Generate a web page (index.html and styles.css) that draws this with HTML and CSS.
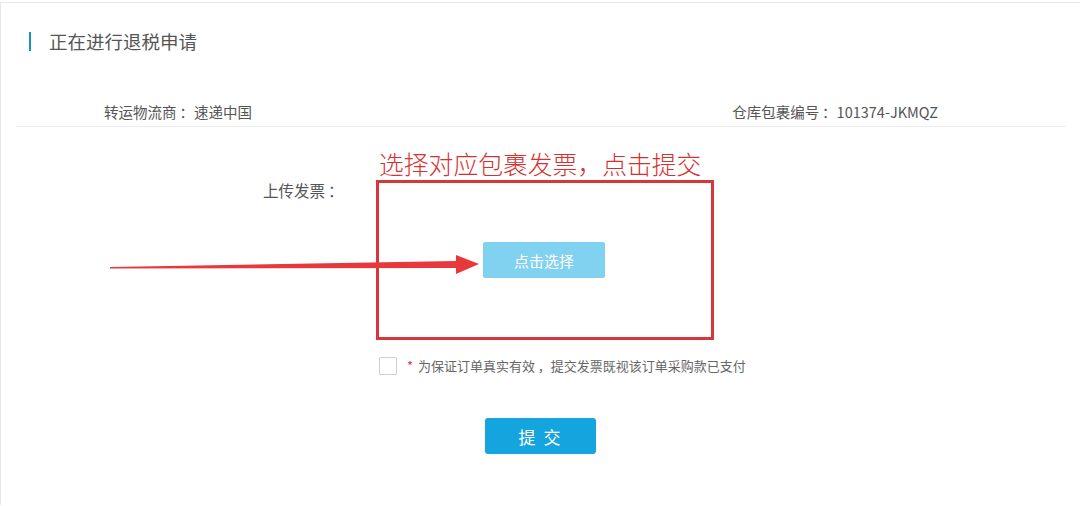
FILE: index.html
```html
<!DOCTYPE html>
<html lang="zh-CN">
<head>
    <meta charset="UTF-8">
    <meta name="viewport" content="width=device-width, initial-scale=1.0">
    <title>退税申请</title>
    <link rel="stylesheet" href="styles.css">
</head>
<body>
    <div class="panel">
        <div class="title">
            <span class="title-bar"></span>
            <span>正在进行退税申请</span>
        </div>

        <div class="info">
            <span>转运物流商<span class="colon">：</span>速递中国</span>
            <span>仓库包裹编号<span class="colon">：</span>101374-JKMQZ</span>
        </div>

        <div class="upload">
            <div></div>
            <div class="note">选择对应包裹发票，点击提交</div>
            <label class="upload-label">上传发票<span class="colon">：</span></label>
            <div class="upload-box">
                <button type="button" class="pick">点击选择</button>
            </div>
        </div>

        <div class="agree">
            <span class="checkbox"></span>
            <span class="star">*</span>
            <span>为保证订单真实有效<span class="colon">，</span>提交发票既视该订单采购款已支付</span>
        </div>

        <button type="button" class="submit">提 交</button>

        <!-- annotation arrow -->
        <svg class="arrow" width="372" height="26" viewBox="0 0 372 26">
            <polygon points="2,15 348,9 348,3 371,12 348,22 348,16 2,16.5" fill="#e8383b"/>
        </svg>
    </div>
</body>
</html>
```

FILE: styles.css
```css
body {
    margin: 0;
    background-color: #fff;
    font-family: "Noto Sans CJK SC", "Liberation Sans", sans-serif;
    color: #555;
}

.panel {
    position: relative;
    margin-top: 2px;
    height: 503px;
    border-top: 1px solid #e8e8e8;
    border-left: 1px solid #e8e8e8;
    box-sizing: border-box;
}

/* push full-width punctuation toward the middle of its cell */
.colon {
    padding-left: 0.2em;
}

.title {
    display: flex;
    align-items: center;
    gap: 18px;
    padding-top: 28px;
    padding-left: 28px;
    font-size: 18.5px;
    line-height: 20px;
    color: #555;
}

.title-bar {
    width: 2px;
    height: 19px;
    background-color: #1b8fc9;
}

.info {
    display: flex;
    justify-content: space-between;
    margin: 51px 14px 0 15px;
    padding: 0 128px 4px 88px;
    border-bottom: 1px solid #ececec;
    font-size: 14.5px;
    line-height: 20px;
}

.upload {
    display: grid;
    grid-template-columns: 113px auto;
    row-gap: 2px;
    padding-left: 262px;
    margin-top: 21px;
}

.note {
    padding-left: 3px;
    font-size: 24.8px;
    line-height: 30px;
    color: #d8302f;
    font-weight: 300;
}

.upload-label {
    font-size: 15.5px;
    line-height: 20px;
    color: #555;
}

.upload-box {
    display: flex;
    justify-content: center;
    align-items: center;
    width: 338px;
    height: 160px;
    box-sizing: border-box;
    border: 3px solid #d7363b;
}

.pick {
    width: 122px;
    height: 36px;
    border: none;
    border-radius: 2px;
    background-color: #80d2f0;
    color: #fff;
    font-family: inherit;
    font-size: 15px;
    margin-left: -2px;
}

.agree {
    display: flex;
    align-items: center;
    margin-top: 17px;
    padding-left: 378px;
    font-size: 13px;
    line-height: 18px;
    color: #666;
}

.checkbox {
    width: 16px;
    height: 16px;
    border: 1px solid #cfcfcf;
    border-radius: 1px;
    margin-right: 10px;
}

.star {
    color: #d9435a;
    margin-right: 5px;
}

.submit {
    display: block;
    margin: 43px 0 0 484px;
    width: 111px;
    height: 36px;
    border: none;
    border-radius: 3px;
    background-color: #14a5de;
    color: #fff;
    font-family: inherit;
    font-size: 17px;
    letter-spacing: 2px;
}

.arrow {
    position: absolute;
    left: 107px;
    top: 249px;
}
```
